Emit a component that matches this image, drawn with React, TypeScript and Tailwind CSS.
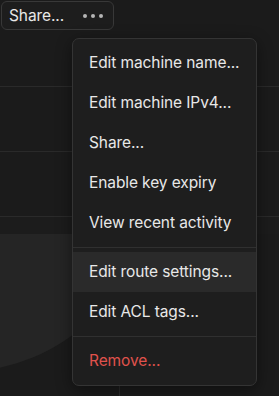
import React from 'react'

type Item = {
  label: string
  danger?: boolean
  active?: boolean
}

const groups: Item[][] = [
  [
    { label: 'Edit machine name...' },
    { label: 'Edit machine IPv4...' },
    { label: 'Share...' },
    { label: 'Enable key expiry' },
    { label: 'View recent activity' },
  ],
  [{ label: 'Edit route settings...', active: true }, { label: 'Edit ACL tags...' }],
  [{ label: 'Remove...', danger: true }],
]

function MachineMenu() {
  return (
    <div className="absolute left-[72px] top-[38px] w-[185px] rounded-[7px] border border-[#343434] bg-[#1e1e1e] py-[4px] shadow-[0_4px_16px_rgba(0,0,0,0.45)]">
      {groups.map((group, gi) => (
        <div key={gi}>
          {gi > 0 ? <div className="my-[4px] h-px bg-[#303030]" /> : null}
          {group.map((item) => (
            <div
              key={item.label}
              className={`flex h-[40px] items-center pl-[16px] text-[15.5px] tracking-[-0.1px] ${
                item.active ? 'bg-[#2a2a2a]' : ''
              } ${item.danger ? 'text-[#e0524c]' : 'text-[#e8e8e8]'}`}
            >
              {item.label}
            </div>
          ))}
        </div>
      ))}
    </div>
  )
}

export default function App() {
  return (
    <div className="relative h-[396px] w-[279px] overflow-hidden bg-[#1b1b1b] font-['Inter',sans-serif]">
      <div className="flex h-[87px] items-start border-b border-[#2a2a2a] pl-px pt-px">
        <div className="flex h-[29px] w-[113px] items-center rounded-[6px] border border-[#383838] bg-[#1d1d1d] pl-[7px]">
          <span className="text-[15.5px] tracking-[-0.1px] text-[#e8e8e8]">Share...</span>
          <div className="ml-[19px] flex gap-[4px]">
            <span className="h-[4px] w-[4px] rounded-full bg-[#b5b5b5]" />
            <span className="h-[4px] w-[4px] rounded-full bg-[#b5b5b5]" />
            <span className="h-[4px] w-[4px] rounded-full bg-[#b5b5b5]" />
          </div>
        </div>
      </div>
      <div className="h-[65px] border-b border-[#2a2a2a]" />
      <div className="h-[65px] border-b border-[#2a2a2a]" />
      <div className="h-[17px] bg-[#1c1c1c]" />
      <div className="relative h-[162px] overflow-hidden">
        <svg className="absolute left-0 top-0" width="279" height="162" viewBox="0 0 279 162">
          <circle cx="-40" cy="-52" r="190" fill="#252525" />
        </svg>
      </div>
      <div className="absolute left-[119px] top-[380px] h-[16px] w-px bg-[#2c2c2c]" />
      <MachineMenu />
    </div>
  )
}
